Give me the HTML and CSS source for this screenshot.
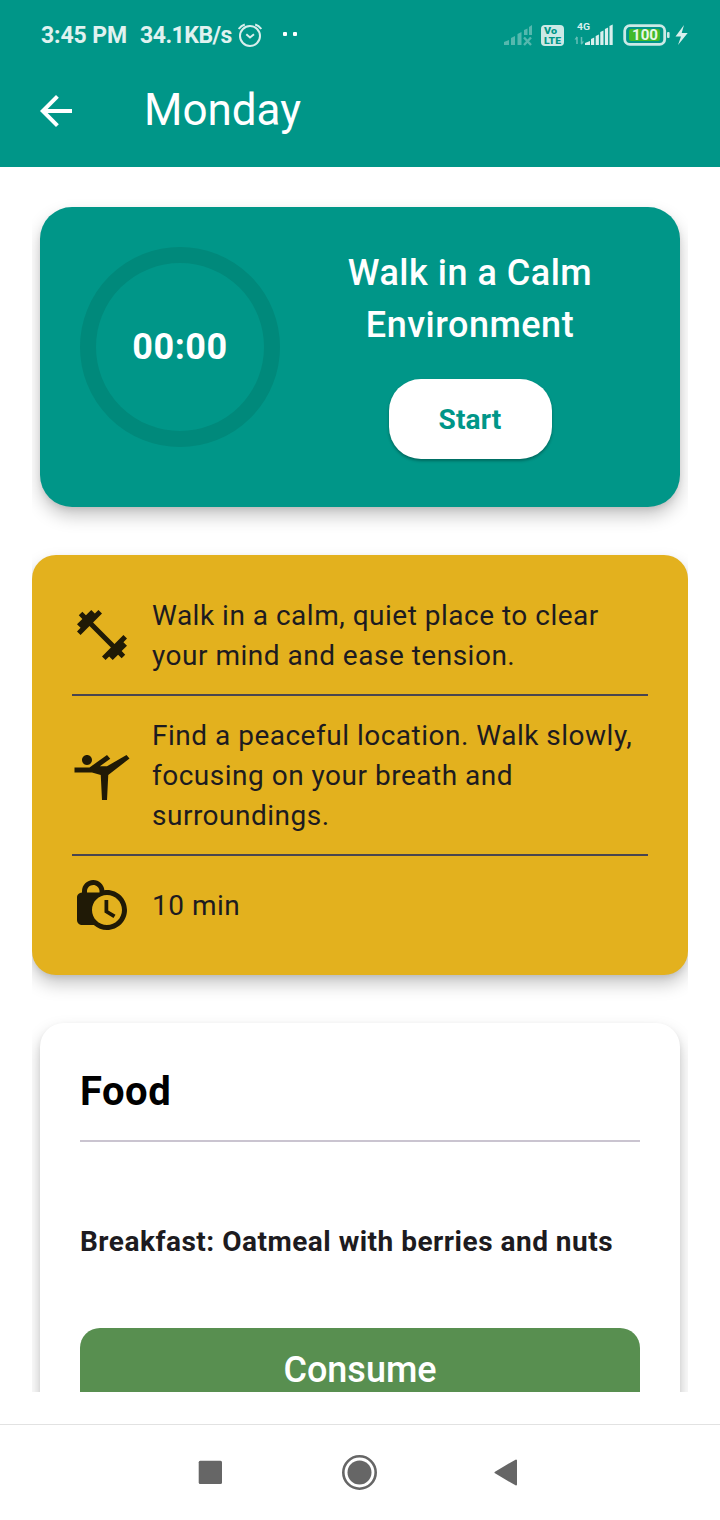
FILE: index.html
```html
<!DOCTYPE html>
<html lang="en">
<head>
<meta charset="utf-8">
<title>Monday</title>
<link rel="stylesheet" href="styles.css">
</head>
<body>
<div class="screen">
  <header class="header">
    <div class="status">
      <span class="time">3:45 PM</span>
      <span class="speed">34.1KB/s</span>
      <svg class="alarm" width="24" height="24" viewBox="0 0 24 24" fill="none" stroke="#d9efed" stroke-width="2">
        <circle cx="12" cy="13" r="10"/>
        <path d="M8.300 11.300l3.700 3.200 4-3.200M.700 6C2 4.200 4 2.300 6.800 1.500M23.300 6C22 4.200 20 2.300 17.200 1.500"/>
      </svg>
      <span class="dots"><i></i><i></i></span>
      <span class="spacer"></span>
      <svg class="indicators" width="190" height="30" viewBox="0 0 190 30">
        <g fill="#55b8ae">
          <path d="M4 25v-3l5-2v5zM11 25v-7l4-2v9zM17.500 25V14l4-2v13zM24 15v-5l3.500-1.500V15zM29 15V7l3-2v10z"/>
          <path d="M24 17.500l7 7.500M31 17.500l-7 7.500" stroke="#55b8ae" stroke-width="2.400"/>
        </g>
        <rect x="41" y="5" width="23" height="21" rx="4" fill="#cce9e6"/>
        <text x="44" y="14" class="volte" textLength="13" lengthAdjust="spacingAndGlyphs">Vo</text>
        <text x="44" y="24.300" class="volte" textLength="17" lengthAdjust="spacingAndGlyphs">LTE</text>
        <text x="77" y="10" class="net" textLength="13" lengthAdjust="spacingAndGlyphs">4G</text>
        <path d="M77 24v-7M81.500 17v7" stroke="#66bfb7" stroke-width="1.500"/>
        <path d="M74.500 19.500l2.500-3.500v3.500zM84 21.500l-2.500 3.500v-3.500z" fill="#66bfb7"/>
        <path fill="#d9efed" d="M85 25v-2l5-2v4zM91 25v-6l3.200-1.500V25zM95.700 25v-9l3.200-1.500V25zM100.300 25V12l3.200-1.500V25zM104.900 25V9l3.200-1.500V25zM109.500 25V6l3.200-1.500V25z"/>
        <rect x="124.700" y="5.700" width="40" height="18.600" rx="5" fill="none" stroke="#cce9e6" stroke-width="2.800"/>
        <rect x="129" y="9" width="31" height="12" rx="2" fill="#43b929"/>
        <rect x="167" y="12" width="2.600" height="6" rx="1" fill="#cce9e6"/>
        <text x="132" y="20.200" class="battery" textLength="26" lengthAdjust="spacingAndGlyphs">100</text>
        <path d="M184 5l-8.500 11.500h5.500l-3 8.500 9.700-12h-6z" fill="#d9efed"/>
      </svg>
    </div>
    <div class="appbar">
      <svg width="48" height="48" viewBox="0 0 24 24" fill="#fff"><path d="M20 11H7.830l5.590-5.590L12 4l-8 8 8 8 1.410-1.410L7.830 13H20v-2z"/></svg>
      <h1 class="title">Monday</h1>
    </div>
  </header>

  <main class="content">
    <section class="card timer-card">
      <div class="ring"><span>00:00</span></div>
      <div class="activity">
        <h2 class="activity-name">Walk in a Calm<br>Environment</h2>
        <button class="start">Start</button>
      </div>
    </section>

    <section class="card details">
      <div class="detail">
        <svg width="60" height="60" viewBox="0 0 24 24"><path d="M20.570 14.860L22 13.430 20.570 12 17 15.570 8.430 7 12 3.430 10.570 2 9.140 3.430 7.710 2 5.570 4.140 4.140 2.710 2.710 4.140l1.430 1.430L2 7.710l1.430 1.430L2 10.570 3.430 12 7 8.430 15.570 17 12 20.570 13.430 22l1.430-1.430L16.290 22l2.140-2.140 1.430 1.430 1.430-1.430-1.430-1.430L22 16.290z"/></svg>
        <p>Walk in a calm, quiet place to clear<br>your mind and ease tension.</p>
      </div>
      <hr class="rule">
      <div class="detail">
        <svg width="60" height="60" viewBox="0 0 24 24"><path d="M4 6c0-1.100.900-2 2-2s2 .900 2 2-.900 2-2 2-2-.900-2-2zM1 9h6l7-5 1.310 1.520L11.140 8.500H14L21.800 4 23 5.400 14.500 12 14 22h-2l-.500-10L8 11H1V9z"/></svg>
        <p>Find a peaceful location. Walk slowly,<br>focusing on your breath and<br>surroundings.</p>
      </div>
      <hr class="rule">
      <div class="detail">
        <svg width="60" height="60" viewBox="0 0 24 24"><path d="M14.500 14.200l2.900 1.700-.800 1.300L13 15v-5h1.500v4.200zM22 14c0 4.410-3.590 8-8 8-2.020 0-3.860-.760-5.270-2H4c-1.150 0-2-.850-2-2V9c0-1.120.890-1.960 2-2v-.500C4 4.010 6.010 2 8.500 2c2.340 0 4.240 1.790 4.460 4.080C13.300 6.030 13.650 6 14 6c4.410 0 8 3.590 8 8zM6 7h5v-.740C10.880 4.990 9.800 4 8.500 4 7.120 4 6 5.120 6 6.500V7zm14 7c0-3.310-2.690-6-6-6s-6 2.690-6 6 2.690 6 6 6 6-2.690 6-6z"/></svg>
        <p>10 min</p>
      </div>
    </section>

    <section class="card food">
      <h2 class="food-title">Food</h2>
      <hr class="food-rule">
      <p class="meal">Breakfast: Oatmeal with berries and nuts</p>
      <button class="consume">Consume</button>
    </section>
  </main>

  <nav class="navbar">
    <svg width="720" height="95" viewBox="0 0 720 95" fill="#666">
      <rect x="198.700" y="35.700" width="23.300" height="23.300" rx="1.500"/>
      <circle cx="359.500" cy="47.500" r="16.200" fill="none" stroke="#666" stroke-width="2.600"/>
      <circle cx="359.500" cy="47.500" r="12"/>
      <path d="M495.500 47.500l20.500-12v24z" stroke="#666" stroke-width="2" stroke-linejoin="round"/>
    </svg>
  </nav>
</div>
</body>
</html>
```
FILE: styles.css
```css
* { box-sizing: border-box; margin: 0; }

body {
  background: #fff;
  font-family: Roboto, "Liberation Sans", sans-serif;
}

button { border: 0; padding: 0; font-family: inherit; }

.screen {
  width: 720px;
  height: 1520px;
  display: flex;
  flex-direction: column;
  overflow: hidden;
}

.header {
  height: 167px;
  flex: none;
  background: #009688;
  color: #fff;
}

.status {
  height: 70px;
  display: flex;
  align-items: center;
  padding: 0 30px 0 41px;
  color: #e0f2f0;
  font-size: 23px;
  font-weight: 700;
  white-space: nowrap;
}

.time { width: 99px; letter-spacing: -.1px; }
.speed { width: 97px; letter-spacing: -.5px; }
.alarm { flex: none; margin-left: 1px; }
.dots { display: flex; gap: 6px; margin: 0 0 2px 21px; }
.dots i { width: 4px; height: 4px; border-radius: 1px; background: #fff; }
.spacer { flex: 1; }
.indicators { flex: none; }
.volte { fill: #009688; font-size: 9.5px; font-weight: 900; }
.net { fill: #d9efed; font-size: 9.5px; font-weight: 700; }
.battery { fill: #e8f7e8; font-size: 14.5px; font-weight: 700; }

.appbar {
  height: 81px;
  display: flex;
  align-items: center;
  gap: 64px;
  padding-left: 32px;
}

.title { font-size: 44px; font-weight: 400; line-height: 56px; padding-bottom: 2px; }

.content {
  flex: none;
  width: 656px;
  height: 1225px;
  margin: 0 auto;
  padding-top: 40px;
  display: flex;
  flex-direction: column;
  gap: 48px;
  overflow: hidden;
}

.card {
  flex: none;
  box-shadow: 0 9px 17px rgba(0, 0, 0, .22), 0 3px 6px -1px rgba(0, 0, 0, .1);
}

.timer-card {
  height: 300px;
  margin: 0 8px;
  padding: 40px;
  border-radius: 32px;
  background: #009688;
  color: #fff;
  display: flex;
  gap: 20px;
}

.ring {
  width: 200px;
  height: 200px;
  border: 16px solid #00897b;
  border-radius: 50%;
  display: grid;
  place-items: center;
  font-size: 36px;
  font-weight: 700;
  letter-spacing: .5px;
}

.activity {
  flex: 1;
  display: flex;
  flex-direction: column;
  align-items: center;
  gap: 28px;
}

.activity-name {
  font-size: 36px;
  font-weight: 500;
  line-height: 52px;
  letter-spacing: .5px;
  text-align: center;
}

.start {
  width: 163px;
  height: 80px;
  border-radius: 32px;
  background: #fff;
  color: #009688;
  font-size: 28px;
  font-weight: 700;
  letter-spacing: .2px;
  box-shadow: 0 2px 3px rgba(0, 0, 0, .3);
}

.details {
  height: 420px;
  padding: 40px;
  border-radius: 24px;
  background: #e3b11e;
}

.detail {
  display: flex;
  align-items: center;
  gap: 20px;
  color: #1d1b20;
  font-size: 28px;
  line-height: 40px;
  letter-spacing: .5px;
  white-space: nowrap;
}

.detail svg { flex: none; fill: #201a06; }
.detail p { padding-top: 1px; margin-bottom: -1px; }
.detail:last-child p { padding-top: 2px; margin-bottom: 0; }

.rule {
  height: 2px;
  margin: 19px 0;
  border: 0;
  background: #49454f;
}

.food {
  margin: 0 8px;
  height: 500px;
  padding: 41px 40px 40px;
  border-radius: 24px;
  background: #fff;
}

.food-title { font-size: 40px; font-weight: 700; line-height: 56px; letter-spacing: .5px; color: #000; }
.food-rule { height: 2px; margin: 20px 0 80px; border: 0; background: #cac4d0; }

.meal {
  color: #1d1b20;
  font-size: 28px;
  font-weight: 700;
  line-height: 40px;
  letter-spacing: .5px;
  white-space: nowrap;
}

.consume {
  display: block;
  width: 100%;
  height: 84px;
  margin-top: 66px;
  border-radius: 20px;
  background: #588f50;
  color: #fff;
  font-size: 36px;
  font-weight: 500;
}

.navbar {
  flex: none;
  height: 96px;
  margin-top: 32px;
  border-top: 1px solid #e2e2e2;
}
```
